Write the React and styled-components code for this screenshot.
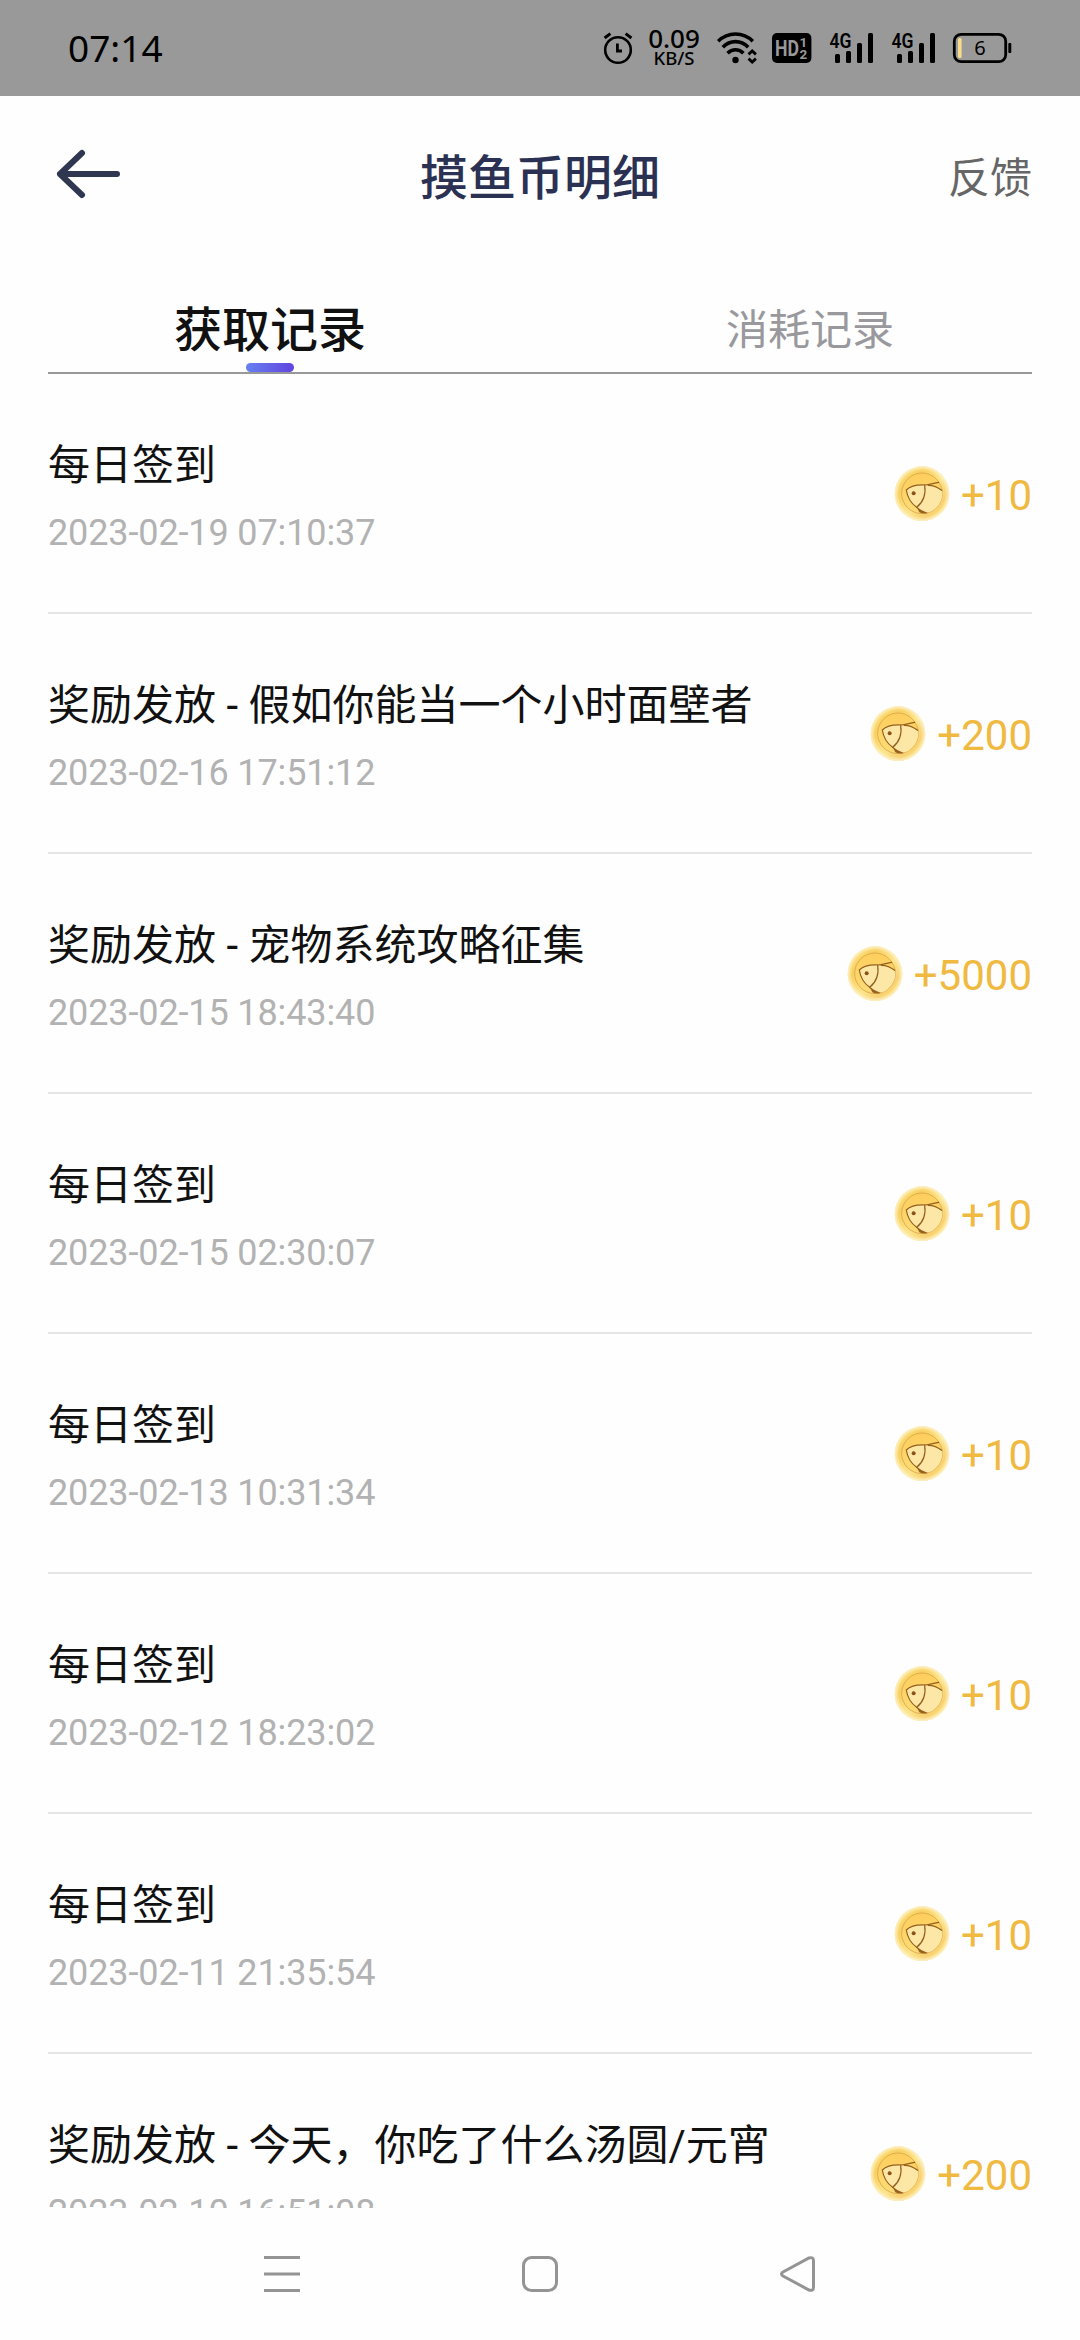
import React from "react";
import styled, { createGlobalStyle } from "styled-components";

const GlobalStyle = createGlobalStyle`
    body {
        margin: 0;
        background: #fefefe;
        font-family: Roboto, "Noto Sans CJK SC", sans-serif;
    }
`;

const Screen = styled.div`
    display: flex;
    flex-direction: column;
    width: 1080px;
    height: 2340px;
    overflow: hidden;
    background: #fefefe;
`;

const StatusBar = styled.div`
    display: flex;
    align-items: center;
    flex: none;
    height: 96px;
    padding: 0 68px;
    box-sizing: border-box;
    background: #999999;
    color: #000000;
    font-family: "Noto Sans", sans-serif;
`;

const Clock = styled.span`
    flex: 1;
    font-size: 37px;
    line-height: 96px;
`;

const Speed = styled.div`
    display: flex;
    flex-direction: column;
    align-items: center;
    width: 54px;
    margin: 0 16px 0 14px;
    padding-bottom: 2px;
    font-weight: 500;
    font-size: 26px;
    line-height: 21px;

    & small {
        font-size: 18.5px;
        line-height: 18px;
    }
`;

const StatusIcon = styled.svg`
    display: block;
    flex: none;
    overflow: visible;
    margin-right: ${(props) => props.$gap || 0}px;
`;

const Header = styled.div`
    display: grid;
    grid-template-columns: 1fr auto 1fr;
    align-items: center;
    flex: none;
    height: 156px;
    padding: 0 48px;
`;

const Title = styled.h1`
    margin: 0;
    padding-top: 10px;
    color: #2b3152;
    font-size: 48px;
    line-height: 64px;
    font-weight: 500;
`;

const Feedback = styled.span`
    justify-self: end;
    padding-top: 9px;
    color: #666666;
    font-size: 42px;
    line-height: 64px;
`;

const Tabs = styled.div`
    display: flex;
    flex: none;
    height: 120px;
`;

const Tab = styled.div`
    position: relative;
    flex: 1;
    padding-top: 47px;
    text-align: center;
    color: ${(props) => (props.$active ? "#111111" : "#99999d")};
    font-size: ${(props) => (props.$active ? 48 : 42)}px;
    font-weight: ${(props) => (props.$active ? 500 : 400)};
    line-height: 64px;

    &:after {
        content: "";
        position: absolute;
        display: ${(props) => (props.$active ? "block" : "none")};
        left: 50%;
        bottom: 0;
        width: 48px;
        height: 9px;
        margin-left: -24px;
        border-radius: 5px;
        background: linear-gradient(90deg, #6680f0, #6244e0);
    }
`;

const Rule = styled.div`
    flex: none;
    height: 2px;
    margin: 0 48px;
    background: #999999;
`;

const List = styled.div`
    flex: 1;
    min-height: 0;
    overflow: hidden;
    padding: 0 48px;
`;

const Row = styled.div`
    display: flex;
    align-items: center;
    justify-content: space-between;
    height: 240px;
    box-sizing: border-box;
    border-bottom: 2px solid #e5e5e5;
`;

const Details = styled.div`
    padding-top: 13px;
`;

const Name = styled.div`
    color: #111111;
    font-size: 42px;
    line-height: 68px;
`;

const Time = styled.div`
    color: #b2b2b2;
    font-size: 36px;
    line-height: 67px;
    letter-spacing: -0.12px;
`;

const Amount = styled.div`
    display: flex;
    align-items: center;
    gap: 10px;
    padding-top: 1px;
    color: #f0b940;
    font-size: 42px;
    line-height: 56px;

    & span {
        padding-top: 4px;
    }
`;

const NavBar = styled.div`
    display: flex;
    align-items: center;
    justify-content: center;
    gap: 222px;
    flex: none;
    height: 132px;
`;

const records = [
    { name: "每日签到", time: "2023-02-19 07:10:37", amount: "+10" },
    { name: "奖励发放 - 假如你能当一个小时面壁者", time: "2023-02-16 17:51:12", amount: "+200" },
    { name: "奖励发放 - 宠物系统攻略征集", time: "2023-02-15 18:43:40", amount: "+5000" },
    { name: "每日签到", time: "2023-02-15 02:30:07", amount: "+10" },
    { name: "每日签到", time: "2023-02-13 10:31:34", amount: "+10" },
    { name: "每日签到", time: "2023-02-12 18:23:02", amount: "+10" },
    { name: "每日签到", time: "2023-02-11 21:35:54", amount: "+10" },
    { name: "奖励发放 - 今天，你吃了什么汤圆/元宵", time: "2023-02-10 16:51:08", amount: "+200" },
];

const AlarmIcon = () => (
    <StatusIcon width="30" height="32" viewBox="0 0 30 32" fill="none" stroke="#000">
        <circle cx="15" cy="18" r="12.8" strokeWidth="2.6" />
        <path d="M14.4 11.5V19H19" strokeWidth="2.8" />
        <path d="M1.6 6L7.4 1.6M28.4 6L22.6 1.6" strokeWidth="3" />
    </StatusIcon>
);

const WifiIcon = () => (
    <StatusIcon $gap={15} width="40" height="32" viewBox="0 0 40 32" fill="none" stroke="#000">
        <path d="M1.2 9.2C11 -0.4 26 -0.4 35.8 9.2" strokeWidth="3.6" />
        <path d="M5.8 15.2C13 7.8 24 7.8 31.2 15.2" strokeWidth="3.6" />
        <path d="M10.6 21.2C15 16.6 22 16.6 26.4 21.2" strokeWidth="3.6" />
        <circle cx="18.5" cy="28" r="3.2" fill="#000" stroke="none" />
        <path d="M31.5 22.4L35.2 19L38.9 22.4M31.5 26.6L35.2 30L38.9 26.6" strokeWidth="2.8" />
    </StatusIcon>
);

const HdIcon = () => (
    <StatusIcon $gap={17} width="40" height="30" viewBox="0 0 40 30" fontFamily="Roboto" fontWeight="700" fill="#999">
        <rect width="39.4" height="30" rx="5" fill="#000" />
        <text x="3" y="23" fontSize="22.5" textLength="24" lengthAdjust="spacingAndGlyphs">
            HD
        </text>
        <text x="27.5" y="14" fontSize="13.5">
            1
        </text>
        <text x="27.5" y="25.500" fontSize="13.5">
            2
        </text>
    </StatusIcon>
);

const SignalIcon = () => (
    <StatusIcon $gap={17} width="45" height="30" viewBox="0 0 45 30">
        <text x="0.5" y="15" fontFamily="Roboto" fontWeight="600" fontSize="20.5" textLength="22" lengthAdjust="spacingAndGlyphs">
            4G
        </text>
        <rect x="6" y="21" width="5" height="9" rx="1.5" />
        <rect x="17" y="18" width="5" height="12" rx="1.5" />
        <rect x="28" y="10" width="5" height="20" rx="1.5" />
        <rect x="39" y="0" width="5" height="30" rx="1.5" />
    </StatusIcon>
);

const BatteryIcon = () => (
    <StatusIcon width="59" height="30" viewBox="0 0 59 30">
        <rect x="1.3" y="1.3" width="51.4" height="27.4" rx="7" fill="none" stroke="#000" strokeWidth="2.8" />
        <rect x="5" y="5" width="3.6" height="20" rx="1.5" fill="#f7dc8b" />
        <rect x="55.3" y="10" width="3" height="10" rx="1" />
        <text x="27" y="22" textAnchor="middle" fontFamily="Noto Sans" fontWeight="400" fontSize="20">
            6
        </text>
    </StatusIcon>
);

const BackIcon = () => (
    <svg width="72" height="52" viewBox="0 0 72 52" fill="none" stroke="#2f3650" strokeWidth="6" strokeLinecap="round" strokeLinejoin="round">
        <path d="M34 5L12 26L34 47M12 26H69" />
    </svg>
);

const Coin = () => (
    <svg width="58" height="56" viewBox="97 79 174 168">
        <defs>
            <linearGradient id="rim" x1="0" y1="0" x2="1" y2="1">
                <stop offset="0.1" stopColor="#fbe07a" />
                <stop offset="0.3" stopColor="#f9cf60" />
                <stop offset="0.55" stopColor="#fce58c" />
                <stop offset="0.75" stopColor="#f8d070" />
                <stop offset="1" stopColor="#fdea6e" />
            </linearGradient>
            <radialGradient id="edge">
                <stop offset="0.84" stopColor="#fff4cc" stopOpacity="0" />
                <stop offset="1" stopColor="#fff6d4" stopOpacity="0.9" />
            </radialGradient>
            <linearGradient id="face" x1="0" y1="0" x2="0" y2="1">
                <stop offset="0" stopColor="#fdce5c" />
                <stop offset="1" stopColor="#fcdc78" />
            </linearGradient>
        </defs>
        <circle cx="184" cy="162" r="82" fill="url(#rim)" />
        <circle cx="184" cy="162" r="82" fill="url(#edge)" />
        <circle cx="184" cy="161" r="61" fill="url(#face)" stroke="#dba545" strokeWidth="2.5" />
        <path d="M137 151C150 139 172 135 192 136C215 134 232 141 244 154C249 178 232 209 205 218C190 222 178 216 168 203C150 190 141 172 137 151Z" fill="#fde7a6" />
        <path d="M170 206L202 220C191 223 183 222 176 218Z" fill="#9a6424" />
        <g fill="none" stroke="#96601f" strokeWidth="3.6" strokeLinecap="round" strokeLinejoin="round">
            <path d="M234 128C218 130 208 136 192 136C170 135 148 140 137 151C140 172 150 190 168 203L186 218" />
            <path d="M192 136C196 163 187 188 168 203" />
            <path d="M203 137C218 137 232 143 243 152" />
        </g>
        <circle cx="159" cy="161" r="6" fill="#8a5416" />
    </svg>
);

const App = () => (
    <Screen>
        <GlobalStyle />
        <StatusBar>
            <Clock>07:14</Clock>
            <AlarmIcon />
            <Speed>
                0.09
                <small>KB/S</small>
            </Speed>
            <WifiIcon />
            <HdIcon />
            <SignalIcon />
            <SignalIcon />
            <BatteryIcon />
        </StatusBar>

        <Header>
            <BackIcon />
            <Title>摸鱼币明细</Title>
            <Feedback>反馈</Feedback>
        </Header>

        <Tabs>
            <Tab $active>获取记录</Tab>
            <Tab>消耗记录</Tab>
        </Tabs>
        <Rule />

        <List>
            {records.map((record) => (
                <Row key={record.time}>
                    <Details>
                        <Name>{record.name}</Name>
                        <Time>{record.time}</Time>
                    </Details>
                    <Amount>
                        <Coin />
                        <span>{record.amount}</span>
                    </Amount>
                </Row>
            ))}
        </List>

        <NavBar>
            <svg width="36" height="36" fill="none" stroke="#949494" strokeWidth="3">
                <path d="M0 1.5H36M0 18H36M0 34.5H36" />
            </svg>
            <svg width="36" height="36" fill="none" stroke="#949494" strokeWidth="3">
                <rect x="1.5" y="1.5" width="33" height="33" rx="8" />
            </svg>
            <svg width="36" height="36" fill="none" stroke="#949494" strokeWidth="3">
                <path d="M3 16L29 2Q33.5 0.5 33.5 5V31Q33.5 35.5 29 34L3 20Q0 18 3 16Z" />
            </svg>
        </NavBar>
    </Screen>
);

export default App;
